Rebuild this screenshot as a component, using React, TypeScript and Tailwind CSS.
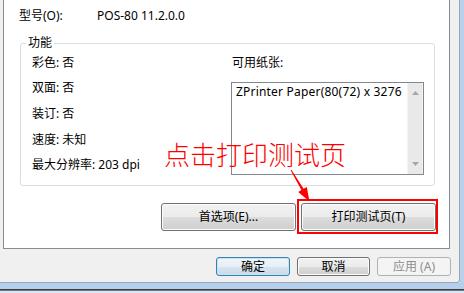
const FONT = "font-['Noto_Sans','Noto_Sans_CJK_SC',sans-serif]";

const capabilities = [
  { label: '彩色', value: '否' },
  { label: '双面', value: '否' },
  { label: '装订', value: '否' },
  { label: '速度', value: '未知' },
  { label: '最大分辨率', value: '203 dpi' },
];

function Win7Button({
  children,
  className = '',
  variant = 'normal',
}: {
  children: React.ReactNode;
  className?: string;
  variant?: 'normal' | 'default' | 'disabled';
}) {
  const skin =
    variant === 'disabled'
      ? 'border-[#adb2b5] bg-[#f4f4f4] text-[#8d8d8d]'
      : variant === 'default'
        ? 'border-[#3c7fb1] bg-[linear-gradient(#f0f6fa_0%,#e6eff5_50%,#d7e5ef_50%,#c9dbe8_100%)] shadow-[inset_0_0_0_1px_#c4e5f6] text-black'
        : 'border-[#707070] bg-[linear-gradient(#f2f2f2_0%,#ebebeb_50%,#dddddd_50%,#cfcfcf_100%)] shadow-[inset_0_0_0_1px_#fcfcfc] text-black';
  return (
    <div
      className={`flex items-center justify-center rounded-[3px] border leading-[16px] ${skin} ${className}`}
    >
      {children}
    </div>
  );
}

function ScrollArrow({ down = false }: { down?: boolean }) {
  return (
    <svg width="7" height="4" viewBox="0 0 7 4">
      <polygon points={down ? '0,0 7,0 3.5,4' : '0,4 7,4 3.5,0'} fill="#a6a6a6" />
    </svg>
  );
}

export default function App() {
  return (
    <div className={`relative h-[293px] w-[464px] overflow-hidden bg-[#f0f0f0] text-[12px] text-black ${FONT}`}>
      <div className="flex h-[283px]">
        <div className="flex h-[283px] w-[460px] shrink-0 flex-col border-r border-b border-[#9aa6b3] rounded-br-[3px]">
          {/* tab page */}
          <div className="ml-[3px] flex h-[249px] w-[447px] shrink-0 flex-col border-x border-b border-[#898c95] bg-white">
            <div className="flex h-[24px] pt-[8px] pl-[15px] leading-[16px]">
              <span className="w-[78px]">型号(O):</span>
              <span>POS-80 11.2.0.0</span>
            </div>

            <div className="relative mt-[19px] ml-[16px] flex h-[143px] w-[415px] rounded-[3px] border border-[#d5dfe5]">
              <span className="absolute -top-[9px] left-[5px] bg-white px-[2px] leading-[16px]">功能</span>

              <div className="flex w-[210px] flex-col pt-[6px] pl-[11px]">
                {capabilities.map((c) => (
                  <div key={c.label} className="flex h-[25.6px] items-center whitespace-nowrap">
                    {c.label}: {c.value}
                  </div>
                ))}
              </div>

              <div className="flex flex-col pt-[6px]">
                <div className="flex h-[26px] items-center pl-[1px]">可用纸张:</div>
                <div className="mt-[6px] flex h-[93px] w-[193px] border border-[#828790]">
                  <div className="flex-1 overflow-hidden whitespace-nowrap pt-[1px] pl-[4px] leading-[16px] tracking-[0.2px]">
                    ZPrinter Paper(80(72) x 3276
                  </div>
                  <div className="flex w-[16px] flex-col items-center justify-between bg-[#e9e9e9] py-[8px] shadow-[inset_1px_0_0_#f3f3f3,inset_-1px_0_0_#f3f3f3]">
                    <ScrollArrow />
                    <ScrollArrow down />
                  </div>
                </div>
              </div>
            </div>

            <div className="mt-[17px] flex justify-end gap-[5px] pr-[13px]">
              <Win7Button className="h-[28px] w-[135px]">首选项(E)...</Win7Button>
              <Win7Button className="h-[28px] w-[135px]">打印测试页(T)</Win7Button>
            </div>
          </div>

          {/* dialog buttons */}
          <div className="flex justify-end gap-[7px] pt-[8px] pr-[8px]">
            <Win7Button variant="default" className="h-[19px] w-[74px]">确定</Win7Button>
            <Win7Button className="h-[19px] w-[73px]">取消</Win7Button>
            <Win7Button variant="disabled" className="h-[19px] w-[74px]">应用 (A)</Win7Button>
          </div>
        </div>
        <div className="h-full flex-1 bg-[#b9d2ec]" />
      </div>
      <div className="h-[6px] bg-[#b4cfeb]" />
      <div className="h-[1px] bg-[#3b3f44]" />
      <div className="h-[1px] bg-[#6d7680]" />
      <div className="h-[2px] bg-[#dbe6f1]" />

      {/* annotation */}
      <div className="absolute top-[199px] left-[297px] h-[35px] w-[141px] border-2 border-[#ff0000]" />
      <div className="absolute top-[141px] left-[164px] whitespace-nowrap text-[26px] leading-[26px] font-light text-[#ff0000] font-['Noto_Sans_CJK_SC',sans-serif]">
        点击打印测试页
      </div>
      <svg className="pointer-events-none absolute top-0 left-0" width="464" height="293">
        <polygon
          points="290.6,170.2 291.4,169.8 303.6,188.7 306.8,186.9 309.5,201.5 298.2,191.9 301.4,190.1"
          fill="#ff0000"
        />
      </svg>
    </div>
  );
}
